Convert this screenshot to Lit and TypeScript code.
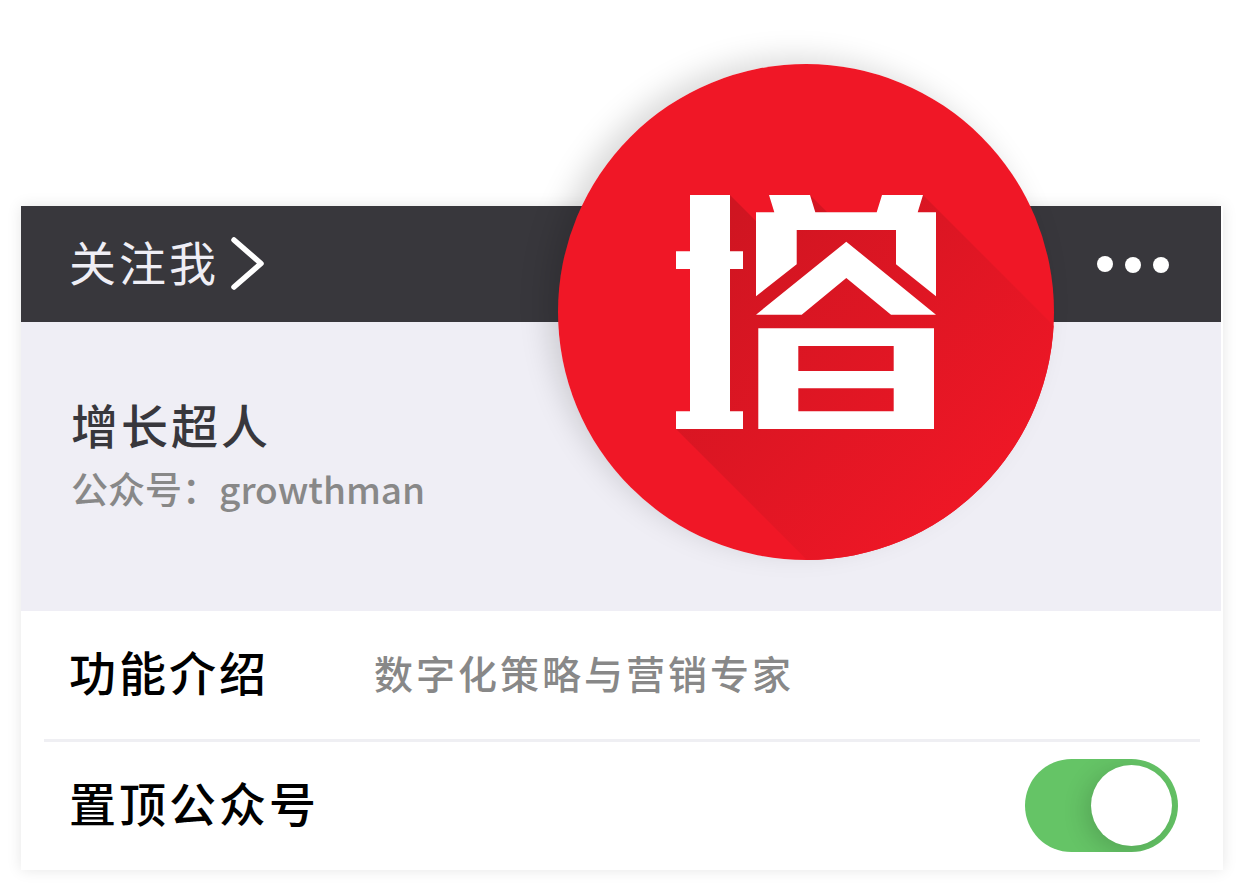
import { LitElement, html, css, svg } from "lit";
import { customElement, property, state } from "lit/decorators.js";

@customElement("tower-logo")
class TowerLogo extends LitElement {
  static styles = css`
    :host {
      display: block;
    }
    .mark {
      display: block;
      width: 100%;
      height: 100%;
    }
  `;

  render() {
    return html`
      <svg class="mark" viewBox="0 0 496 496" role="img" aria-label="增长超人">
        <defs>
          <linearGradient id="shade" gradientUnits="userSpaceOnUse" x1="160" y1="160" x2="440" y2="440">
            <stop offset="0" stop-color="#cf1521" />
            <stop offset="1" stop-color="#f01726" />
          </linearGradient>
          <clipPath id="disc"><circle cx="248" cy="248" r="248" /></clipPath>
        </defs>
        <circle cx="248" cy="248" r="248" fill="#f01726" />
        <path
          clip-path="url(#disc)"
          fill="url(#shade)"
          d="M118 365L132 347V131H172L198 157V149L216 148L211 131H252L269 148H319L324 131H365L600 366V847Z"
        />
        <g fill="#fff" fill-rule="evenodd">
          <path d="M132 131H172V187.3H185V205H172V347.3H185V365H118V347.3H132V205H118V187.3H132Z" />
          <path
            d="M211 131H252L257.3 148.3H318.7L324 131H365L359.7 148.3H378V232.3L338 200.3V166H238.7V200.3L198 232.3V148.3H216.3Z"
          />
          <path d="M288.3 177.7L378 250.7H333L288.3 214L243.7 250.7H198Z" />
          <path d="M200.3 264.3H376V365H200.3ZM240.3 282H335.7V307H240.3ZM240.3 324.3H335.7V347.3H240.3Z" />
        </g>
      </svg>
    `;
  }
}

@customElement("app-root")
class AppRoot extends LitElement {
  static styles = css`
    :host {
      display: block;
      box-sizing: border-box;
      padding: 206px 19px 21px 21px;
      font-family: "Noto Sans CJK SC", sans-serif;
      font-size: 47px;
      line-height: 64px;
      letter-spacing: 3px;
      color: #000;
      background: #fff;
    }
    .card {
      position: relative;
      background: #fff;
      box-shadow: 0 0 14px rgba(0, 0, 0, 0.1);
    }
    .bar {
      display: flex;
      align-items: center;
      justify-content: space-between;
      height: 116px;
      margin-right: 2px;
      padding: 0 48px;
      box-sizing: border-box;
      background: #38373c;
    }
    .plain {
      display: flex;
      align-items: center;
      margin: 0;
      padding: 0;
      border: 0;
      background: none;
      color: #efeef5;
      font: inherit;
      letter-spacing: inherit;
      cursor: pointer;
    }
    .follow {
      gap: 11px;
    }
    .follow-text {
      padding-bottom: 6px;
    }
    .chevron {
      width: 36px;
      height: 56px;
    }
    .dots {
      width: 80px;
      height: 24px;
    }
    .profile {
      margin-right: 2px;
      padding: 70px 50px 96px;
      background: #efeef5;
    }
    .name {
      margin: 0;
      font-size: 47px;
      font-weight: 500;
      color: #38373c;
    }
    .account {
      margin: 0;
      padding-top: 6px;
      font-size: 37px;
      font-weight: 500;
      line-height: 53px;
      letter-spacing: normal;
      color: #888;
    }
    .logo {
      position: absolute;
      top: -142px;
      right: 169px;
      width: 496px;
      height: 496px;
      border-radius: 50%;
      box-shadow: -12px -8px 30px -2px rgba(0, 0, 0, 0.15);
    }
    .row {
      display: flex;
      align-items: center;
      height: 126px;
      margin: 0 23px;
      padding: 0 22px 2px 25px;
    }
    .row + .row {
      border-top: 3px solid #efeff3;
    }
    .label {
      min-width: 305px;
      padding-bottom: 6px;
      font-weight: 500;
    }
    .value {
      padding-bottom: 4px;
      font-size: 39px;
      font-weight: 500;
      color: #888;
    }
    .switch {
      appearance: none;
      display: flex;
      justify-content: flex-start;
      box-sizing: border-box;
      width: 153px;
      height: 93px;
      margin: 0 0 0 auto;
      padding: 6px;
      border-radius: 47px;
      overflow: hidden;
      background: #ccc;
      cursor: pointer;
    }
    .switch:checked {
      justify-content: flex-end;
      background: #65c466;
    }
    .switch::before {
      content: "";
      width: 81px;
      height: 81px;
      border-radius: 50%;
      background: #fff;
      box-shadow: -5px 5px 24px rgba(0, 0, 0, 0.16);
    }
  `;

  @property() name = "增长超人";
  @property() account = "growthman";
  @state() private pinned = true;

  private onPin(e: Event) {
    this.pinned = (e.target as HTMLInputElement).checked;
  }

  render() {
    return html`
      <main class="card">
        <header class="bar">
          <button class="plain follow" type="button">
            <span class="follow-text">关注我</span>
            <svg class="chevron" viewBox="0 0 36 56" aria-hidden="true">
              <path
                d="M4 4L31 27.5L4 51"
                fill="none"
                stroke="#fff"
                stroke-width="5.5"
                stroke-linecap="round"
                stroke-linejoin="round"
              />
            </svg>
          </button>
          <button class="plain" type="button" aria-label="更多">
            <svg class="dots" viewBox="0 0 80 24" aria-hidden="true">
              ${[
                [12, 12],
                [40, 13],
                [68, 13],
              ].map(([x, y]) => svg`<circle cx=${x} cy=${y} r="8" fill="#fff" />`)}
            </svg>
          </button>
        </header>
        <section class="profile">
          <h1 class="name">${this.name}</h1>
          <p class="account">公众号：${this.account}</p>
        </section>
        <tower-logo class="logo"></tower-logo>
        <div class="row">
          <span class="label">功能介绍</span>
          <span class="value">数字化策略与营销专家</span>
        </div>
        <div class="row">
          <label class="label" for="pin">置顶公众号</label>
          <input class="switch" id="pin" type="checkbox" role="switch" .checked=${this.pinned} @change=${this.onPin} />
        </div>
      </main>
    `;
  }
}
